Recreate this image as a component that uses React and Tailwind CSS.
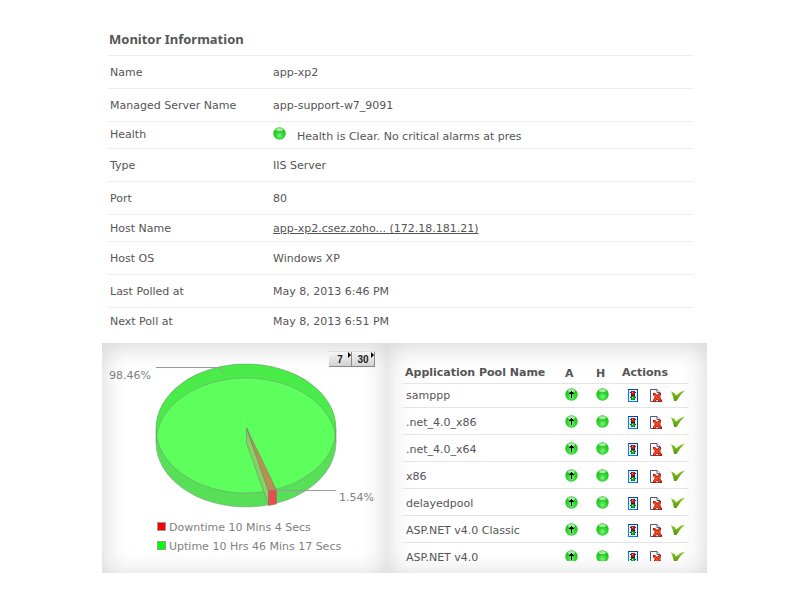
import React, { useState } from 'react'

const details = [
  { label: 'Name', value: 'app-xp2', height: 'h-[33px]' },
  { label: 'Managed Server Name', value: 'app-support-w7_9091', height: 'h-[33px]' },
  { label: 'Health', value: 'Health is Clear. No critical alarms at pres', height: 'h-[27px]', status: true },
  { label: 'Type', value: 'IIS Server', height: 'h-[33px]' },
  { label: 'Port', value: '80', height: 'h-[33px]' },
  { label: 'Host Name', value: 'app-xp2.csez.zoho... (172.18.181.21)', height: 'h-[27px]', link: true },
  { label: 'Host OS', value: 'Windows XP', height: 'h-[33px]' },
  { label: 'Last Polled at', value: 'May 8, 2013 6:46 PM', height: 'h-[33px]' },
  { label: 'Next Poll at', value: 'May 8, 2013 6:51 PM', height: 'h-[27px]' },
]

const pools = ['samppp', '.net_4.0_x86', '.net_4.0_x64', 'x86', 'delayedpool', 'ASP.NET v4.0 Classic', 'ASP.NET v4.0']

// Green ball, with an arrow when the pool is up
const StatusBall = ({ arrow = false, className = '' }) => (
  <svg viewBox="0 0 13 13" className={`w-[13px] h-[13px] ${className}`} aria-hidden="true">
    <defs>
      <radialGradient id="ball" cx="0.5" cy="0.68" r="0.65">
        <stop offset="0" stopColor="#86f086" />
        <stop offset="0.4" stopColor="#3bd83b" />
        <stop offset="0.75" stopColor="#1bcb1b" />
        <stop offset="1" stopColor="#2cc42c" />
      </radialGradient>
    </defs>
    <circle cx="6.5" cy="6.5" r="6.2" fill="url(#ball)" />
    <ellipse cx="6.5" cy="2.4" rx="3.6" ry="1.5" fill="#fff" opacity="0.6" />
    {arrow && <path d="M6 10V6H4V5h1V4h1V3h1v1h1v1h1v1H7v4z" fill="#000" />}
  </svg>
)

// Traffic light
const LightIcon = () => (
  <svg viewBox="0 0 10 13" className="w-[10px] h-[13px]" aria-hidden="true">
    <path d="M0 0h10v13H0z" fill="#0a7cf4" />
    <path d="M0 0h10v1H0zM9 0h1v13H9z" fill="#0a4a90" />
    <path d="M1 1h8v11H1z" fill="#d8f2ff" />
    <path d="M2 3h6v1H2zM2 8h6v1H2zM3 2h4v9H3z" fill="#33202a" />
    <circle cx="5" cy="4" r="1.9" fill="#e01414" />
    <circle cx="5" cy="9" r="1.9" fill="#10b810" />
    <path d="M4 3h1v1H4z" fill="#ff8c8c" />
    <path d="M4 8h1v1H4z" fill="#90ff90" />
  </svg>
)

// Sheet of paper with a red cross
const DeleteIcon = () => (
  <svg viewBox="0 0 12 13" className="w-[12px] h-[13px]" aria-hidden="true">
    <path d="M0.5 0.5H7l3 3v9H0.5z" fill="#f8f8fc" stroke="#5a5670" />
    <path d="M7 0.5v3h3" fill="#fff" stroke="#5a5670" />
    <path d="M3 4h2l2 2 2-2h2v2L9 8l3 3v2H9.5L7 10.500 5 13H3v-2l2-3-2-2z" fill="#b41400" />
    <path d="M4 5.200l6.500 6.500M10 5l-6 6.800" stroke="#ff4a1c" strokeWidth="1.500" fill="none" />
  </svg>
)

const CheckIcon = () => (
  <svg viewBox="0 0 14 12" className="w-[14px] h-[12px]" aria-hidden="true">
    <defs>
      <linearGradient id="check" x1="0" y1="0" x2="0" y2="1">
        <stop offset="0" stopColor="#8fd02c" />
        <stop offset="1" stopColor="#559208" />
      </linearGradient>
    </defs>
    <path d="M0 1.200L3.800 3.200 5 5.500 9.500 2 14 0.500Q9 4.800 5.400 11H3.200Q2 6 0 1.200z" fill="url(#check)" />
  </svg>
)

const AvailabilityChart = () => (
  <svg viewBox="0 0 285 170" className="block w-[285px] h-[170px]" role="img" aria-label="Availability">
    <defs>
      <clipPath id="disc-top">
        <ellipse cx="144" cy="85.5" rx="90" ry="64.5" />
      </clipPath>
    </defs>
    {/* sides of the disc, then the part where both ellipses overlap */}
    <path d="M54 85.500a90 64.500 0 0 1 180 0v14a90 64.500 0 0 1-180 0z" fill="#57e057" />
    <ellipse cx="144" cy="85.5" rx="90" ry="64.5" fill="#4aec4a" />
    <ellipse cx="144" cy="99.5" rx="90" ry="64.5" fill="#5cff5c" clipPath="url(#disc-top)" />
    <g fill="none" stroke="#808080" strokeOpacity="0.45">
      <ellipse cx="144" cy="85.5" rx="90" ry="64.5" />
      <ellipse cx="144" cy="99.5" rx="90" ry="64.5" />
      <path d="M54 85.500v14M234 85.500v14" />
    </g>
    {/* downtime slice */}
    <g stroke="#777" strokeOpacity="0.6" strokeWidth="0.800">
      <path d="M144.500 85v15l22 62v-14z" fill="#84d465" />
      <path d="M144.500 85l22 63 8-1z" fill="#ba8f50" />
      <path d="M166.500 148l8-1v14l-8 1.500z" fill="#e84d50" />
    </g>
    <path d="M54 24.500h63M117.500 24.500l4 6M174 147.500h60" fill="none" stroke="#999" strokeWidth="1" />
    <g className="text-[11px]" fill="#808080">
      <text x="7" y="36">98.46%</text>
      <text x="237" y="158">1.54%</text>
    </g>
  </svg>
)

const RangeButton = ({ days, onClick }) => (
  <button
    onClick={onClick}
    aria-label={`${days} days`}
    className="relative w-[23px] h-[15px] bg-gradient-to-b from-[#f6f6f6] to-[#d2d2d2] border-r border-b border-[#888] text-[10px] leading-[16px] font-bold text-[#222] font-['Liberation_Sans',sans-serif]"
  >
    {days}
    <svg viewBox="0 0 3 6" className="absolute right-0 top-0 w-[3px] h-[6px]" aria-hidden="true">
      <path d="M0 0l3 3-3 3z" fill="#000" />
    </svg>
  </button>
)

const Panel = ({ children, className = '' }) => (
  <section className={`h-[230px] bg-white shadow-[inset_0_3px_26px_rgba(0,0,0,0.18)] ${className}`}>
    {children}
  </section>
)

export default function App() {
  const [, setDays] = useState(7)

  return (
    <main className="min-h-screen bg-white pl-[102px] pr-[93px] pt-[30px] text-[11px] leading-[14px] text-[#555] font-['DejaVu_Sans',Verdana,sans-serif]">
      <div className="pl-[6px] pr-[13px]">
        <h1 className="h-[25px] leading-[18px] pl-px text-[13px] font-bold font-['Noto_Sans',sans-serif]">Monitor Information</h1>
        <table className="w-full table-fixed border-collapse">
          <tbody>
            {details.map((row) => (
              <tr key={row.label} className={`${row.height} border-t border-[#eee]`}>
                <th scope="row" className={`w-[165px] pl-[2px] text-left font-normal ${row.status ? '' : 'pt-[2px]'}`}>{row.label}</th>
                <td className={`whitespace-nowrap ${row.status ? '' : 'pt-[2px]'}`}>
                  {row.status ? (
                    <span className="flex items-start">
                      <StatusBall className="mr-[11px]" />
                      <span className="pt-[3px]">{row.value}</span>
                    </span>
                  ) : row.link ? (
                    <a href="#host" className="underline">{row.value}</a>
                  ) : (
                    row.value
                  )}
                </td>
              </tr>
            ))}
          </tbody>
        </table>
      </div>

      <div className="mt-2 flex">
        <Panel className="relative w-[285px] shrink-0">
          <AvailabilityChart />
          <div className="absolute top-2 right-3 flex border-t border-[#ddd]">
            <RangeButton days={7} onClick={() => setDays(7)} />
            <RangeButton days={30} onClick={() => setDays(30)} />
          </div>
          <ul className="pl-[55px] pt-2 text-[#808080]">
            <li className="flex items-start h-[19px]">
              <span className="w-[9px] h-[9px] mt-px mr-[3px] bg-[#f00] border border-[#999]" />
              Downtime 10 Mins 4 Secs
            </li>
            <li className="flex items-start h-[19px]">
              <span className="w-[9px] h-[9px] mt-px mr-[3px] bg-[#0f0] border border-[#999]" />
              Uptime 10 Hrs 46 Mins 17 Secs
            </li>
          </ul>
        </Panel>

        <Panel className="flex-1 pl-4 pr-[18px] pt-[19px]">
          <div className="h-[199px] overflow-hidden">
            <table className="w-full table-fixed border-collapse">
              <thead>
                <tr className="h-[22px] text-left">
                  <th className="pl-[2px] pt-[2px] whitespace-nowrap">Application Pool Name</th>
                  <th className="w-[31px] pt-1">A</th>
                  <th className="w-[26px] pt-1">H</th>
                  <th className="w-[67px] pt-[2px]">Actions</th>
                </tr>
              </thead>
              <tbody className="leading-[10px]">
                {pools.map((pool, i) => (
                  <tr key={pool} className={`${i === 0 ? 'h-[24px]' : 'h-[27px]'} border-t border-[#e4e4e4]`}>
                    <td className={`pl-[3px] whitespace-nowrap ${i === 0 ? '' : 'pt-1'}`}>{pool}</td>
                    <td className={i === 0 ? 'pb-[2px]' : ''}><StatusBall arrow /></td>
                    <td className={i === 0 ? 'pb-[2px]' : ''}><StatusBall /></td>
                    <td className={i === 0 ? '' : 'pt-[2px]'}>
                      <div className="flex items-center pl-[6px]">
                        <button aria-label={`Manage ${pool}`} className="mr-3"><LightIcon /></button>
                        <button aria-label={`Delete ${pool}`} className="mr-[9px]"><DeleteIcon /></button>
                        <button aria-label={`Enable ${pool}`}><CheckIcon /></button>
                      </div>
                    </td>
                  </tr>
                ))}
              </tbody>
            </table>
          </div>
        </Panel>
      </div>
    </main>
  )
}
